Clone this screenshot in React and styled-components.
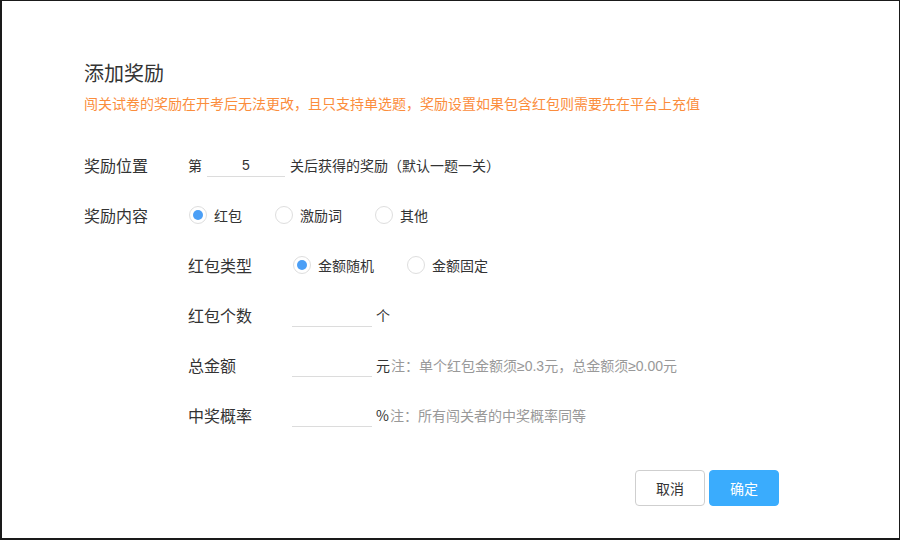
import React, { useState } from 'react'
import styled, { createGlobalStyle } from 'styled-components'

const GlobalStyle = createGlobalStyle`
  html, body {
    margin: 0;
    padding: 0;
    background: #fff;
  }
  body {
    font-family: "Noto Sans CJK SC", "Liberation Sans", sans-serif;
    color: #333;
  }
`

const Frame = styled.div`
  box-sizing: border-box;
  width: 900px;
  height: 540px;
  border: 1px solid #1a1a1a;
  border-left-width: 2px;
  border-bottom-width: 2px;
  background: #fff;
  padding: 59px 120px 0 82px;
  display: flex;
  flex-direction: column;
`

const Title = styled.h2`
  margin: 0;
  font-size: 20px;
  font-weight: 400;
  line-height: 26px;
  color: #333;
`

const Warning = styled.p`
  margin: 7px 0 0;
  font-size: 14px;
  line-height: 20px;
  color: #fb8d3c;
`

const Form = styled.div`
  margin-top: 27px;
  display: flex;
  flex-direction: column;
`

const Row = styled.div`
  display: flex;
  align-items: center;
  height: 50px;
  padding-left: ${p => p.$indent ? '104px' : '0'};
`

const Label = styled.div`
  width: 104px;
  flex: none;
  font-size: 16px;
  color: #333;
`

const Text = styled.span`
  font-size: 14px;
  color: #333;
  white-space: nowrap;
`

const Note = styled.span`
  font-family: "Liberation Sans", "Noto Sans CJK SC", sans-serif;
  font-size: 14px;
  color: #999;
  white-space: nowrap;
  margin-left: 1px;
`

const Input = styled.input`
  box-sizing: border-box;
  width: ${p => p.$w}px;
  height: 24px;
  margin: 0 ${p => p.$mr || 4}px 0 ${p => p.$ml || 0}px;
  border: none;
  border-bottom: 1px solid #dcdcdc;
  outline: none;
  text-align: center;
  font-family: "Liberation Sans", sans-serif;
  font-size: 14px;
  color: #333;
  padding: 0;
  background: transparent;
`

const RadioGroup = styled.div`
  display: flex;
  align-items: center;
  gap: 32px;
`

const RadioItem = styled.label`
  display: flex;
  align-items: center;
  gap: 7px;
  cursor: pointer;
  font-size: 14px;
  color: #333;
`

const Circle = styled.span`
  box-sizing: border-box;
  width: 18px;
  height: 18px;
  margin-left: 1px;
  border-radius: 50%;
  border: 1px solid #dedede;
  background: #fff;
  display: flex;
  align-items: center;
  justify-content: center;
  &::after {
    content: '';
    width: 10px;
    height: 10px;
    border-radius: 50%;
    background: ${p => p.$on ? '#4b9ff6' : 'transparent'};
  }
`

const Footer = styled.div`
  margin-top: 30px;
  display: flex;
  justify-content: flex-end;
  gap: 4px;
`

const Button = styled.button`
  box-sizing: border-box;
  width: 70px;
  height: 36px;
  border-radius: 4px;
  font-family: "Noto Sans CJK SC", sans-serif;
  font-size: 14px;
  cursor: pointer;
  border: 1px solid ${p => p.$primary ? '#3aacfd' : '#cfcfcf'};
  background: ${p => p.$primary ? '#3aacfd' : '#fff'};
  color: ${p => p.$primary ? '#fff' : '#333'};
`

function Radios({ options, value, onChange }) {
  return (
    <RadioGroup>
      {options.map(o => (
        <RadioItem key={o} onClick={() => onChange(o)}>
          <Circle $on={value === o} />
          {o}
        </RadioItem>
      ))}
    </RadioGroup>
  )
}

export default function App() {
  const [content, setContent] = useState('红包')
  const [type, setType] = useState('金额随机')

  return (
    <>
      <GlobalStyle />
      <Frame>
        <Title>添加奖励</Title>
        <Warning>闯关试卷的奖励在开考后无法更改，且只支持单选题，奖励设置如果包含红包则需要先在平台上充值</Warning>
        <Form>
          <Row>
            <Label>奖励位置</Label>
            <Text>第</Text>
            <Input $w={78} $ml={5} $mr={5} defaultValue="5" />
            <Text>关后获得的奖励（默认一题一关）</Text>
          </Row>
          <Row>
            <Label>奖励内容</Label>
            <Radios options={['红包', '激励词', '其他']} value={content} onChange={setContent} />
          </Row>
          <Row $indent>
            <Label>红包类型</Label>
            <Radios options={['金额随机', '金额固定']} value={type} onChange={setType} />
          </Row>
          <Row $indent>
            <Label>红包个数</Label>
            <Input $w={80} />
            <Text>个</Text>
          </Row>
          <Row $indent>
            <Label>总金额</Label>
            <Input $w={80} />
            <Text>元</Text>
            <Note>注：单个红包金额须≥0.3元，总金额须≥0.00元</Note>
          </Row>
          <Row $indent>
            <Label>中奖概率</Label>
            <Input $w={80} />
            <Text>%</Text>
            <Note>注：所有闯关者的中奖概率同等</Note>
          </Row>
        </Form>
        <Footer>
          <Button>取消</Button>
          <Button $primary>确定</Button>
        </Footer>
      </Frame>
    </>
  )
}
